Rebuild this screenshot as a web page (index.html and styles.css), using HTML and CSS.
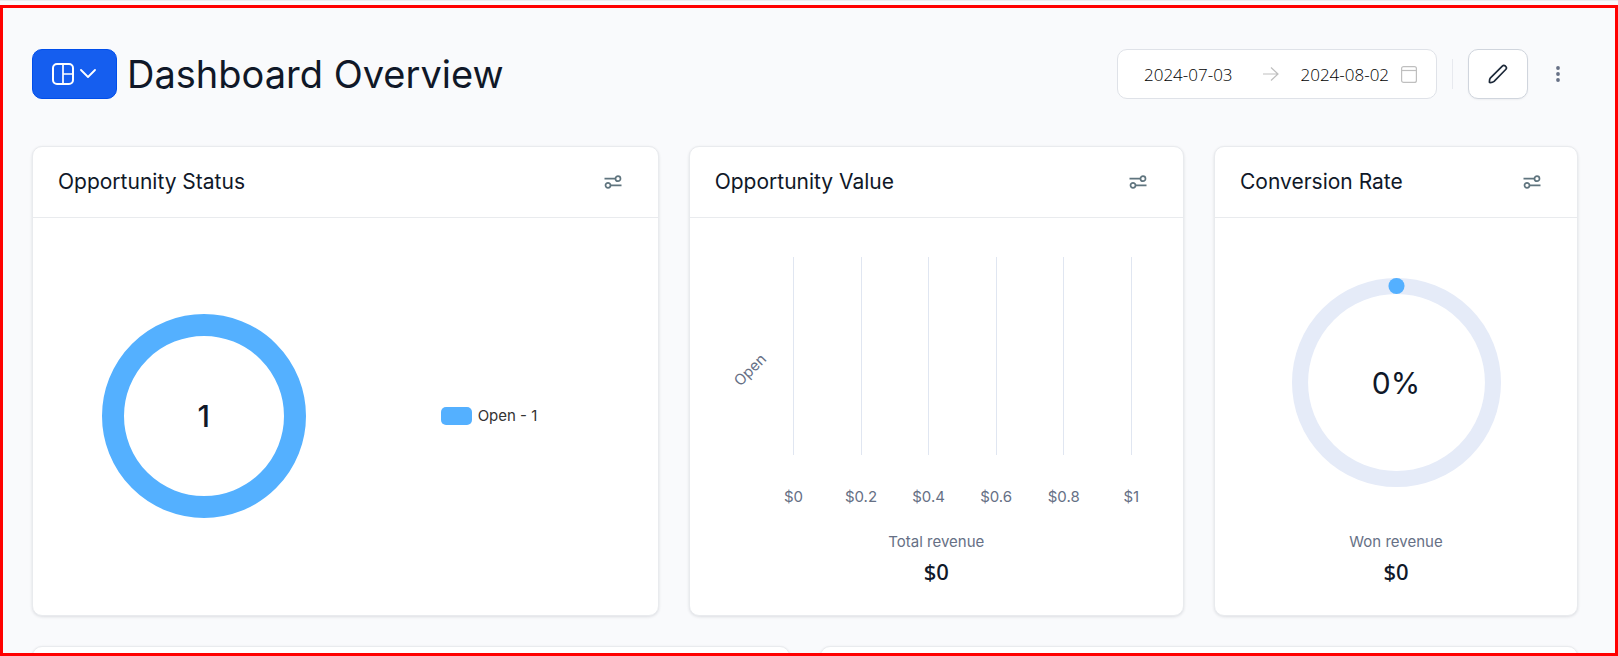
FILE: index.html
```
<!DOCTYPE html>
<html lang="en">
<head>
    <meta charset="UTF-8">
    <meta name="viewport" content="width=device-width, initial-scale=1.0">
    <title>Dashboard Overview</title>
    <link rel="stylesheet" href="styles.css">
</head>
<body>
    <div class="topbar"></div>
    <main class="dashboard">
        <header class="page-header">
            <button type="button" class="btn-layout" aria-label="Choose dashboard">
                <svg width="22" height="22" viewBox="0 0 22 22" fill="none" stroke="currentColor" stroke-width="2">
                    <rect x="1" y="1" width="20" height="20" rx="4"/>
                    <path d="M11 1v20M11 11h10" stroke-width="1.7"/>
                </svg>
                <svg width="16" height="10" viewBox="0 0 16 10" fill="none" stroke="currentColor" stroke-width="1.8" stroke-linecap="round" stroke-linejoin="round">
                    <path d="M1 1l7 7 7-7"/>
                </svg>
            </button>
            <h1>Dashboard Overview</h1>
            <div class="actions">
                <div class="date-range">
                    <input type="text" value="2024-07-03" aria-label="Start date">
                    <svg class="arrow" width="16" height="14" viewBox="0 0 16 14" fill="none" stroke="currentColor" stroke-width="1.2">
                        <path d="M0 7h15M8 0.5L15 7l-7 6.5"/>
                    </svg>
                    <input type="text" value="2024-08-02" aria-label="End date">
                    <svg width="16" height="17" viewBox="0 0 16 17" fill="none" stroke="currentColor" stroke-width="1.2">
                        <rect x="0.6" y="0.6" width="14.8" height="15.8" rx="2"/>
                        <path d="M1 4.5h14"/>
                    </svg>
                </div>
                <span class="divider"></span>
                <button type="button" class="btn-edit" aria-label="Edit dashboard">
                    <svg width="20" height="20" viewBox="0 0 20 20" fill="none" stroke="currentColor" stroke-width="1.7" stroke-linejoin="round">
                        <path d="M1.5 18.5c-.2-1.8.1-3.5 1-4.7L14.3 2.1c.8-.8 2.1-.9 3-.1l.5.5c.8.9.7 2.2-.1 3L6.1 17.3c-1.2 1-2.8 1.4-4.6 1.2z"/>
                    </svg>
                </button>
                <button type="button" class="btn-more" aria-label="More">
                    <svg width="4" height="16" viewBox="0 0 4 16" fill="currentColor">
                        <circle cx="2" cy="2" r="1.9"/>
                        <circle cx="2" cy="8" r="1.9"/>
                        <circle cx="2" cy="14" r="1.9"/>
                    </svg>
                </button>
            </div>
        </header>

        <div class="cards">
            <section class="card span-5">
                <div class="card-header">
                    <h2>Opportunity Status</h2>
                    <button type="button" class="btn-filter" aria-label="Filter opportunity status">
                        <svg width="18" height="14" viewBox="0 0 18 14" fill="none" stroke="currentColor" stroke-width="1.7">
                            <circle cx="14" cy="3.7" r="2.5"/>
                            <circle cx="4" cy="10.3" r="2.5"/>
                            <path d="M0.5 3.7h11M6.5 10.3h11"/>
                        </svg>
                    </button>
                </div>
                <div class="card-body status">
                    <div class="ring">
                        <svg width="204" height="204" viewBox="0 0 204 204" fill="none">
                            <circle cx="102" cy="102" r="91" stroke="#54b0ff" stroke-width="22"/>
                        </svg>
                        <span class="ring-value total">1</span>
                    </div>
                    <div class="legend"><span class="swatch"></span>Open - 1</div>
                </div>
            </section>

            <section class="card span-4">
                <div class="card-header">
                    <h2>Opportunity Value</h2>
                    <button type="button" class="btn-filter" aria-label="Filter opportunity value">
                        <svg width="18" height="14" viewBox="0 0 18 14" fill="none" stroke="currentColor" stroke-width="1.7">
                            <circle cx="14" cy="3.7" r="2.5"/>
                            <circle cx="4" cy="10.3" r="2.5"/>
                            <path d="M0.5 3.7h11M6.5 10.3h11"/>
                        </svg>
                    </button>
                </div>
                <div class="card-body">
                    <div class="chart">
                        <div class="y-axis"><span>Open</span></div>
                        <div class="tick">$0</div>
                        <div class="tick">$0.2</div>
                        <div class="tick">$0.4</div>
                        <div class="tick">$0.6</div>
                        <div class="tick">$0.8</div>
                        <div class="tick">$1</div>
                    </div>
                    <div class="stat">
                        <span class="stat-label">Total revenue</span>
                        <span class="stat-value">$0</span>
                    </div>
                </div>
            </section>

            <section class="card span-3">
                <div class="card-header">
                    <h2>Conversion Rate</h2>
                    <button type="button" class="btn-filter" aria-label="Filter conversion rate">
                        <svg width="18" height="14" viewBox="0 0 18 14" fill="none" stroke="currentColor" stroke-width="1.7">
                            <circle cx="14" cy="3.7" r="2.5"/>
                            <circle cx="4" cy="10.3" r="2.5"/>
                            <path d="M0.5 3.7h11M6.5 10.3h11"/>
                        </svg>
                    </button>
                </div>
                <div class="card-body rate">
                    <div class="ring">
                        <svg width="209" height="209" viewBox="0 0 208 208" fill="none">
                            <circle cx="104" cy="104" r="96" stroke="#e5ebf8" stroke-width="16"/>
                            <circle cx="104" cy="8" r="8" fill="#54b0ff"/>
                        </svg>
                        <span class="ring-value">0%</span>
                    </div>
                    <div class="stat">
                        <span class="stat-label">Won revenue</span>
                        <span class="stat-value">$0</span>
                    </div>
                </div>
            </section>

            <section class="card span-6"></section>
            <section class="card span-6"></section>
        </div>
    </main>
</body>
</html>
```
FILE: styles.css
```
* {
    box-sizing: border-box;
}
body {
    margin: 0;
    height: 100vh;
    display: flex;
    flex-direction: column;
    overflow: hidden;
    font-family: Inter, sans-serif;
    font-size: 15px;
    line-height: 24px;
    color: #101828;
    background-color: #f9fafc;
}
h1, h2 {
    margin: 0;
    font-weight: 400;
}
button {
    display: flex;
    align-items: center;
    justify-content: center;
    padding: 0;
    border: none;
    background: none;
    cursor: pointer;
}
.topbar {
    flex: none;
    height: 5px;
    border-top: 1px solid #eaecef;
}
.dashboard {
    flex: 1;
    min-height: 0;
    overflow: hidden;
    padding: 41px 37px 0 29px;
    border: 3px solid #ff0000;
}

/* header */
.page-header {
    display: flex;
    align-items: center;
    margin-bottom: 47px;
}
.btn-layout {
    gap: 6px;
    width: 85px;
    height: 50px;
    padding-right: 2px;
    margin-right: 10px;
    border: 1px solid #004eeb;
    border-radius: 10px;
    background-color: #155eef;
    color: white;
}
h1 {
    font-size: 38px;
    line-height: 50px;
}
.actions {
    display: flex;
    align-items: center;
    margin-left: auto;
}
.date-range {
    display: flex;
    align-items: center;
    width: 320px;
    height: 50px;
    padding: 0 19px 0 26px;
    border: 1px solid #dfe2e8;
    border-radius: 10px;
    background-color: white;
    color: #bfbfbf;
}
.date-range input {
    flex: 1;
    min-width: 0;
    padding: 0;
    border: none;
    outline: none;
    background: none;
    font-family: "Open Sans", sans-serif;
    font-size: 17px;
    font-weight: 300;
    color: #000;
}
.arrow {
    margin: 0 22px 0 18px;
}
.divider {
    width: 1px;
    height: 30px;
    margin: 0 15px;
    background-color: #e7e9ee;
}
.btn-edit {
    width: 60px;
    height: 50px;
    border: 1px solid #d0d5dd;
    border-radius: 10px;
    background-color: white;
    box-shadow: 0 1px 2px rgba(16, 24, 40, 0.05);
    color: #1d2939;
}
.btn-more {
    width: 40px;
    height: 40px;
    margin-left: 10px;
    color: #667085;
}

/* cards */
.cards {
    display: grid;
    grid-template-columns: repeat(12, 1fr);
    gap: 30px;
}
.span-3 { grid-column: span 3; }
.span-4 { grid-column: span 4; }
.span-5 { grid-column: span 5; }
.span-6 { grid-column: span 6; }
.card {
    display: flex;
    flex-direction: column;
    min-height: 470px;
    border: 1px solid #e9ebee;
    border-radius: 10px;
    background-color: white;
    box-shadow: 0 1px 3px rgba(16, 24, 40, 0.12);
}
.card-header {
    display: flex;
    align-items: center;
    justify-content: space-between;
    height: 71px;
    padding: 0 25px;
    border-bottom: 1px solid #e9ebee;
}
h2 {
    font-size: 21px;
    line-height: 30px;
}
.btn-filter {
    width: 40px;
    height: 40px;
    color: #5f747e;
}
.card-body {
    flex: 1;
    display: flex;
    flex-direction: column;
}

/* charts */
.status {
    flex-direction: row;
    align-items: center;
    padding: 0 26px 1px 28px;
}
.status > * {
    flex: 1;
}
.ring {
    display: grid;
    place-items: center;
}
.ring > * {
    grid-area: 1 / 1;
}
.ring-value {
    font-size: 30px;
    line-height: 40px;
}
.total {
    font-weight: 500;
}
.legend {
    display: flex;
    align-items: center;
    justify-content: center;
    gap: 6px;
    color: #333;
}
.swatch {
    width: 31px;
    height: 18px;
    border-radius: 5px;
    background-color: #54b0ff;
}
.chart {
    display: flex;
    padding: 39px 18px 0 50px;
    color: #667085;
}
.y-axis {
    display: flex;
    align-items: center;
    justify-content: center;
    width: 20px;
    height: 225px;
}
.y-axis span {
    transform: rotate(-45deg);
}
.tick {
    flex: 1;
    text-align: center;
}
.tick::before {
    content: "";
    display: block;
    width: 1px;
    height: 198px;
    margin: 0 auto 30px;
    background-color: #e0e6f1;
}
.rate {
    padding-top: 60px;
}
.stat {
    display: flex;
    flex-direction: column;
    align-items: center;
    margin-top: auto;
    padding-bottom: 27px;
}
.stat-label {
    color: #667085;
}
.stat-value {
    font-family: "Noto Sans", sans-serif;
    font-size: 22px;
    font-weight: 500;
    line-height: 34px;
}
```
